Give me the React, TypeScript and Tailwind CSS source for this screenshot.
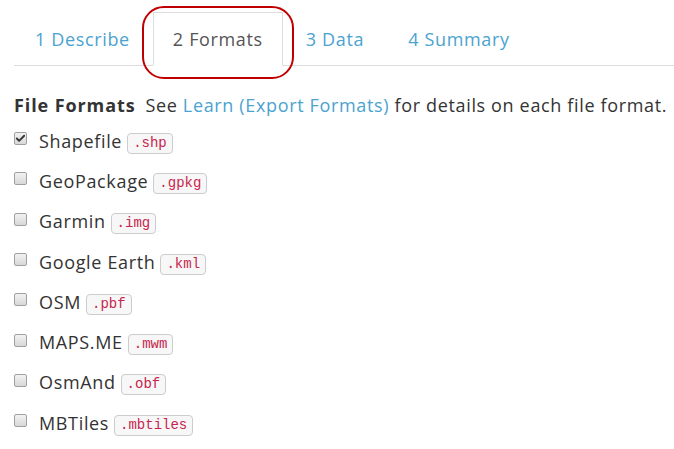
import { Check } from "lucide-react"

const formats = [
  { name: "Shapefile", ext: ".shp", checked: true },
  { name: "GeoPackage", ext: ".gpkg" },
  { name: "Garmin", ext: ".img" },
  { name: "Google Earth", ext: ".kml" },
  { name: "OSM", ext: ".pbf" },
  { name: "MAPS.ME", ext: ".mwm" },
  { name: "OsmAnd", ext: ".obf" },
  { name: "MBTiles", ext: ".mbtiles" },
]

const tabs = ["1 Describe", "2 Formats", "3 Data", "4 Summary"]

export default function App() {
  return (
    <div className="relative w-[674px] h-[449px] bg-white pl-[14px] pt-3 text-[18px] tracking-[0.65px] text-[#333] font-['Open_Sans',sans-serif] overflow-hidden">
      {/* Tabs */}
      <ul className="flex border-b border-[#ddd]">
        {tabs.map((t, i) => (
          <li
            key={t}
            className={
              i === 1
                ? "-mb-px mr-[2px] px-[19px] py-[13px] leading-[26px] border border-[#ddd] border-b-white bg-white text-[#555]"
                : "-mb-px mr-[2px] px-[20px] py-[13px] leading-[26px] border border-transparent text-[#4ba3cf]"
            }
          >
            {t}
          </li>
        ))}
      </ul>

      {/* annotation */}
      <div className="absolute left-[142px] top-[6px] w-[152px] h-[73px] rounded-[22px] border-2 border-[#c00000]" />

      <p className="mt-[26px] leading-[26px] whitespace-nowrap">
        <span className="font-bold tracking-[0.9px]">File Formats</span>
        <span className="ml-[10px]">See </span>
        <a href="#" className="text-[#4ba3cf]">Learn (Export Formats)</a>
        <span> for details on each file format.</span>
      </p>

      <div className="mt-[3px]">
        {formats.map((f) => (
          <div key={f.name} className="flex items-center h-[40.3px]">
            <span className="-mt-[5px] w-[13px] h-[13px] rounded-[2px] border border-[#a0a0a0] bg-gradient-to-b from-[#f2f2f2] to-[#d8d8d8] flex items-center justify-center">
              {f.checked && <Check className="w-[11px] h-[11px] text-[#333]" strokeWidth={4} />}
            </span>
            <span className="ml-[12px]">{f.name}</span>
            <code className="ml-[5px] mt-[4px] h-[21px] px-[5px] flex items-center rounded-[4px] border border-[#ccc] bg-[#f7f7f7] text-[#c7254e] text-[14px] tracking-normal font-['Liberation_Mono',monospace]">
              {f.ext}
            </code>
          </div>
        ))}
      </div>
    </div>
  )
}
